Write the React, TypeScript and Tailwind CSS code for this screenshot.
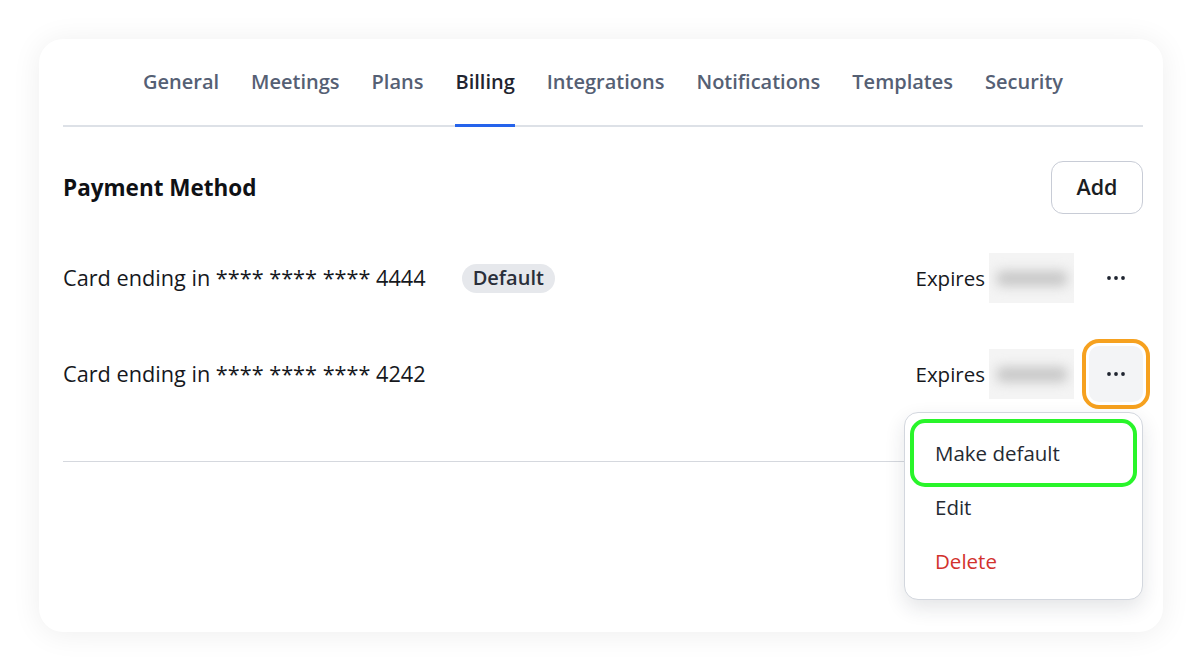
const tabs = ["General", "Meetings", "Plans", "Billing", "Integrations", "Notifications", "Templates", "Security"];

function Dots() {
  return (
    <svg width="22" height="6" viewBox="0 0 22 6" fill="#1f2430">
      <circle cx="4" cy="3" r="1.9" />
      <circle cx="11" cy="3" r="1.9" />
      <circle cx="18" cy="3" r="1.9" />
    </svg>
  );
}

function Blurred() {
  return (
    <div className="w-[85px] h-[50px] bg-[#f4f4f4] flex items-center justify-center overflow-hidden">
      <div className="w-[70px] h-[15px] bg-[#c6c6c6] rounded blur-[6px]" />
    </div>
  );
}

function CardRow({ last4, isDefault, open }: { last4: string; isDefault?: boolean; open?: boolean }) {
  return (
    <div className="h-[96px] flex items-center justify-between">
      <div className="flex items-center gap-[36px]">
        <span className="text-[21.7px] leading-[28px] text-[#16181d]">Card ending in **** **** **** {last4}</span>
        {isDefault && (
          <span className="h-[29px] px-[11px] rounded-full bg-[#e6e8ec] text-[#2a2f3a] text-[20px] font-semibold flex items-center">
            Default
          </span>
        )}
      </div>
      <div className="flex items-center">
        <span className="text-[20.5px] leading-[28px] text-[#16181d] mr-[4px]">Expires</span>
        <Blurred />
        <div className="relative ml-[15px]">
          <button
            className={
              open
                ? "w-[54px] h-[56px] rounded-[10px] bg-[#f3f4f6] flex items-center justify-center outline-[4px] outline-offset-[3px] outline-[#f6a11f]"
                : "w-[54px] h-[56px] rounded-[10px] flex items-center justify-center"
            }
          >
            <Dots />
          </button>
          {open && (
            <div className="absolute right-0 top-[calc(100%+10px)] w-[239px] bg-white rounded-[14px] border border-[#d3d7de] shadow-[0_8px_20px_rgba(30,40,60,0.12)] pt-[13px] pb-[11px] px-[12px] z-10">
              <div className="h-[54px] flex items-center pl-[18px] text-[20.5px] text-[#252a33] rounded-[8px] outline-[4px] outline-offset-[3px] outline-[#29f52a]">
                Make default
              </div>
              <div className="h-[54px] flex items-center pl-[18px] text-[20.5px] text-[#252a33]">Edit</div>
              <div className="h-[54px] flex items-center pl-[18px] text-[20.5px] text-[#d2322d]">Delete</div>
            </div>
          )}
        </div>
      </div>
    </div>
  );
}

export default function App() {
  return (
    <div className="w-full h-[671px] bg-white pt-[39px] px-[39px] font-['Open_Sans',sans-serif]">
      <div className="w-[1124px] h-[593px] rounded-[24px] bg-white shadow-[0_2px_30px_rgba(0,0,0,0.07)] pl-[24px] pr-[20px]">
        {/* Tabs */}
        <nav className="flex justify-center gap-[32px] border-b-2 border-[#dde1e7]">
          {tabs.map((t) => (
            <div
              key={t}
              className={
                t === "Billing"
                  ? "pt-[31px] pb-[30px] -mb-[2px] border-b-[3px] border-[#2563eb] text-[20px] leading-[24px] font-semibold text-[#1f2530]"
                  : "pt-[31px] pb-[30px] -mb-[2px] border-b-[3px] border-transparent text-[20px] leading-[24px] font-semibold text-[#556074]"
              }
            >
              {t}
            </div>
          ))}
        </nav>

        {/* Header */}
        <div className="mt-[34px] flex items-center justify-between">
          <h2 className="text-[22.5px] leading-[28px] font-bold text-[#0f1115]">Payment Method</h2>
          <button className="w-[92px] h-[53px] rounded-[12px] border border-[#c8ccd6] text-[21.5px] font-semibold text-[#1a1d23]">
            Add
          </button>
        </div>

        <div className="mt-[16px]">
          <CardRow last4="4444" isDefault />
          <CardRow last4="4242" open />
        </div>

        <div className="mt-[39px] border-t border-[#d5d8de]" />
      </div>
    </div>
  );
}
